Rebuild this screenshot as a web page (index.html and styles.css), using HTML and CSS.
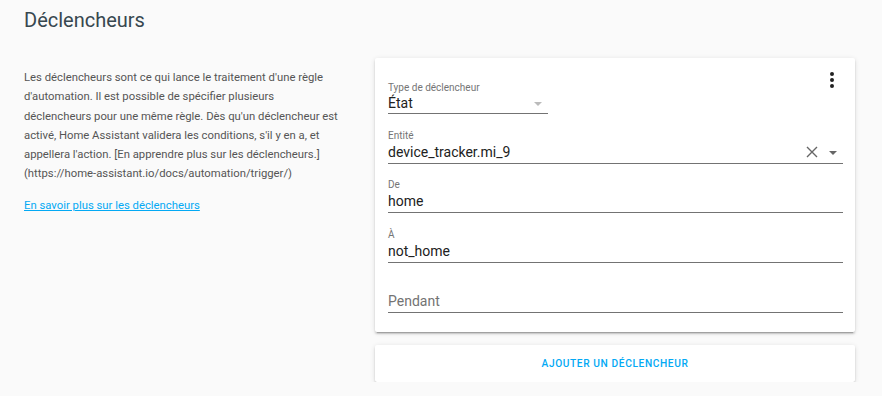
FILE: index.html
```html
<!DOCTYPE html>
<html lang="fr">
<head>
    <meta charset="UTF-8">
    <meta name="viewport" content="width=device-width, initial-scale=1.0">
    <title>Déclencheurs</title>
    <link rel="stylesheet" href="styles.css">
</head>
<body>
    <div class="section">
        <h1 class="section-title">Déclencheurs</h1>
        <div class="section-body">
            <div class="intro">
                <p>Les déclencheurs sont ce qui lance le traitement d'une règle d'automation. Il est possible de spécifier plusieurs déclencheurs pour une même règle. Dès qu'un déclencheur est activé, Home Assistant validera les conditions, s'il y en a, et appellera l'action. [En apprendre plus sur les déclencheurs.] (https://home-assistant.io/docs/automation/trigger/)</p>
                <a href="#" class="learn-more">En savoir plus sur les déclencheurs</a>
            </div>
            <div class="cards">
                <div class="card trigger-card">
                    <button class="menu-btn" aria-label="menu">
                        <svg width="24" height="24" viewBox="0 0 24 24"><path d="M12,16A2,2 0 0,1 14,18A2,2 0 0,1 12,20A2,2 0 0,1 10,18A2,2 0 0,1 12,16M12,10A2,2 0 0,1 14,12A2,2 0 0,1 12,14A2,2 0 0,1 10,12A2,2 0 0,1 12,10M12,4A2,2 0 0,1 14,6A2,2 0 0,1 12,8A2,2 0 0,1 10,6A2,2 0 0,1 12,4Z" fill="#212121"/></svg>
                    </button>
                    <div class="field field-select">
                        <label class="field-label">Type de déclencheur</label>
                        <div class="field-input">
                            <span class="value">État</span>
                            <span class="caret caret-light"></span>
                        </div>
                    </div>
                    <div class="field">
                        <label class="field-label">Entité</label>
                        <div class="field-input">
                            <span class="value">device_tracker.mi_9</span>
                            <svg class="clear" width="14" height="14" viewBox="0 0 14 14"><path d="M2 2 L12 12 M12 2 L2 12" stroke="#666" stroke-width="1.4"/></svg>
                            <span class="caret"></span>
                        </div>
                    </div>
                    <div class="field">
                        <label class="field-label">De</label>
                        <div class="field-input"><span class="value">home</span></div>
                    </div>
                    <div class="field">
                        <label class="field-label">À</label>
                        <div class="field-input"><span class="value">not_home</span></div>
                    </div>
                    <div class="field field-empty">
                        <div class="field-input"><span class="placeholder">Pendant</span></div>
                    </div>
                </div>
                <div class="card add-card">
                    <button class="add-btn">Ajouter un déclencheur</button>
                </div>
            </div>
        </div>
    </div>
</body>
</html>
```

FILE: styles.css
```css
body {
    margin: 0;
    background-color: #fafafa;
    font-family: Roboto, "Noto Sans", sans-serif;
    color: #212121;
}
.section {
    padding: 0 24px;
}
.section-title {
    margin: 0;
    padding-top: 8px;
    font-size: 20px;
    font-weight: 400;
    line-height: 24px;
    color: #37474f;
}
.section-body {
    display: flex;
    gap: 36px;
    margin-top: 26px;
}
.intro {
    width: 315px;
    padding-top: 10px;
    font-size: 11.3px;
    color: #555;
}
.intro p {
    margin: 0;
    line-height: 19.3px;
}
.learn-more {
    display: block;
    margin-top: 15px;
    color: #03a9f4;
    font-size: 11.3px;
}
.cards {
    width: 480px;
    display: flex;
    flex-direction: column;
    gap: 13px;
}
.card {
    background: #fff;
    border-radius: 2px;
    box-shadow: 0 2px 2px 0 rgba(0,0,0,0.14), 0 1px 5px 0 rgba(0,0,0,0.12), 0 3px 1px -2px rgba(0,0,0,0.2);
}
.trigger-card {
    position: relative;
    padding: 24px 12px 19px 13px;
}
.menu-btn {
    position: absolute;
    top: 10px;
    right: 11px;
    border: none;
    background: none;
    padding: 0;
    width: 24px;
    height: 24px;
}
.field {
    margin-bottom: 15.7px;
}
.field:last-child {
    margin-bottom: 0;
}
.field-select {
    width: 160px;
}
.field-label {
    display: block;
    font-size: 10px;
    line-height: 12px;
    color: #757575;
}
.field-input {
    display: flex;
    align-items: center;
    height: 20px;
    padding-bottom: 1px;
    border-bottom: 1px solid #737373;
    font-size: 14px;
}
.field-select .field-input {
    height: 17px;
    padding-bottom: 2px;
}
.value {
    flex: 1;
    color: #212121;
}
.placeholder {
    flex: 1;
    color: #737373;
}
.field-empty {
    padding-top: 12px;
}
.caret {
    width: 0;
    height: 0;
    margin: 2px 6px 0 8px;
    border-left: 4px solid transparent;
    border-right: 4px solid transparent;
    border-top: 4px solid #666;
}
.caret-light {
    border-top-color: #bbb;
}
.clear {
    margin-right: 2px;
}
.add-card {
    height: 37px;
    display: flex;
}
.add-btn {
    flex: 1;
    border: none;
    background: none;
    font-family: Roboto, sans-serif;
    font-size: 10.2px;
    font-weight: 500;
    letter-spacing: 0.6px;
    text-transform: uppercase;
    color: #03a9f4;
}
```
